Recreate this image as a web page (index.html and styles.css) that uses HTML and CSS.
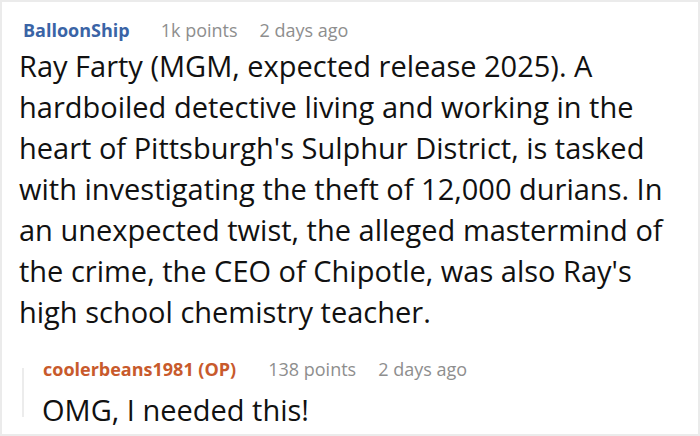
FILE: index.html
```html
<!DOCTYPE html>
<html>
<head>
<meta charset="utf-8">
<link rel="stylesheet" href="styles.css">
</head>
<body>
<div class="card">
  <div class="comment">
    <div class="meta">
      <span class="author">BalloonShip</span>
      <span class="info">1k points</span>
      <span class="info">2 days ago</span>
    </div>
    <p class="text">Ray Farty (MGM, expected release 2025). A hardboiled detective living and working in the heart of Pittsburgh's Sulphur District, is tasked with investigating the theft of 12,000 durians. In an unexpected twist, the alleged mastermind of the crime, the CEO of Chipotle, was also Ray's high school chemistry teacher.</p>
  </div>
  <div class="reply">
    <div class="bar"></div>
    <div class="reply-body">
      <div class="meta">
        <span class="author op">coolerbeans1981 (OP)</span>
        <span class="info">138 points</span>
        <span class="info">2 days ago</span>
      </div>
      <p class="text">OMG, I needed this!</p>
    </div>
  </div>
</div>
</body>
</html>
```
FILE: styles.css
```css
html, body {
  margin: 0;
  padding: 0;
  background: #fff;
}
body {
  font-family: "Open Sans", "Noto Sans", sans-serif;
  color: #111;
}
.card {
  width: 700px;
  height: 436px;
  box-sizing: border-box;
  border: 2px solid #ebebeb;
  padding: 16px 33px 0 17px;
  overflow: hidden;
}
.meta {
  display: flex;
  align-items: baseline;
  font-size: 18px;
  line-height: 24px;
}
.author {
  font-weight: 700;
  color: #3a64a6;
  margin-right: 31px;
  margin-left: 4px;
}
.author.op {
  color: #c85a2c;
  margin-left: 1px;
  margin-right: 32px;
}
.info {
  color: #8e8e8e;
  margin-right: 22px;
}
.text {
  margin: 0;
  font-size: 29px;
  line-height: 41px;
  padding-top: 3px;
}
.reply {
  display: flex;
  margin-top: 25px;
  margin-left: 3px;
}
.bar {
  width: 2px;
  background: #ececec;
  margin: 11px 18px 13px 0;
}
.reply-body {
  flex: 1;
}
.reply .text {
  padding-top: 8px;
}
```
